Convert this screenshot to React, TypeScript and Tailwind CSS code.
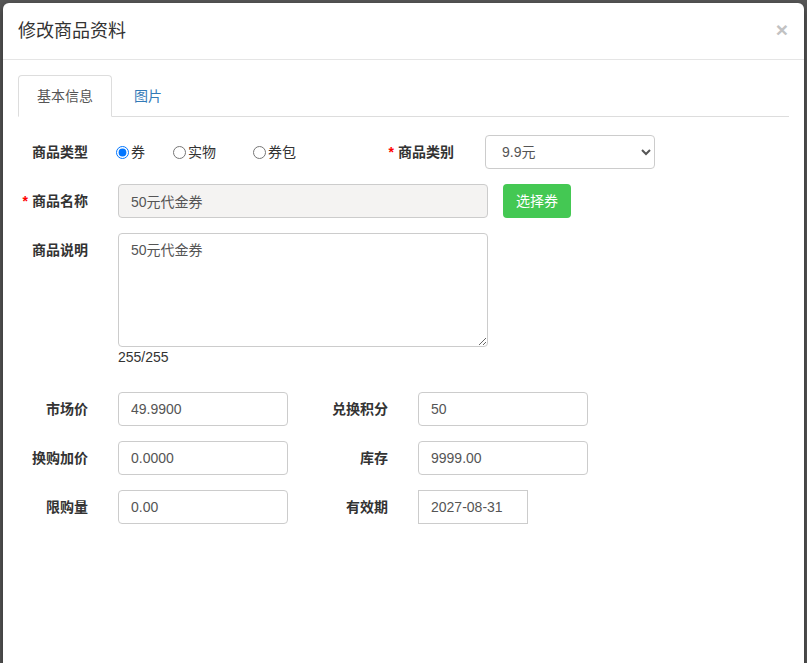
import { useState } from 'react';

const FONT = "'Liberation Sans', 'Noto Sans CJK SC', sans-serif";

const inputCls =
    'h-[34px] border border-[#ccc] rounded-[4px] px-[12px] text-[14px] text-[#555] outline-none';

function Label({ text, required, width }: { text: string; required?: boolean; width: string }) {
    return (
        <label className={`${width} text-right text-[14px] font-bold text-[#333] leading-[20px] shrink-0`}>
            {required && <span className="text-[#f00] mr-[4px]">*</span>}
            {text}
        </label>
    );
}

export default function App() {
    const [kind, setKind] = useState('券');
    const [tab, setTab] = useState('basic');

    return (
        <div
            className="w-[807px] h-[663px] bg-[#585858] overflow-hidden pt-[3px] px-[3px]"
            style={{ fontFamily: FONT }}
        >
            <div className="bg-white rounded-[6px] h-[720px] shadow-[0_3px_9px_rgba(0,0,0,0.5)]">
                {/* Header */}
                <div className="flex items-center justify-between px-[15px] h-[57px] border-b border-[#e5e5e5]">
                    <h4 className="text-[18px] text-[#333] leading-[26px]">修改商品资料</h4>
                    <button type="button" className="text-[21px] font-bold leading-none text-[#c2c2c2] mr-[1px] -mt-[4px]">
                        ×
                    </button>
                </div>

                <div className="px-[15px] pt-[15px]">
                    {/* Tabs */}
                    <ul className="flex border-b border-[#ddd] h-[42px]">
                        <li className="-mb-px mr-[2px]">
                            <button
                                type="button"
                                onClick={() => setTab('basic')}
                                className={
                                    tab === 'basic'
                                        ? 'h-[42px] px-[18px] text-[14px] leading-[20px] text-[#555] bg-white border border-[#ddd] border-b-white rounded-t-[4px]'
                                        : 'h-[42px] px-[18px] text-[14px] leading-[20px] text-[#337ab7] border border-transparent'
                                }
                            >
                                基本信息
                            </button>
                        </li>
                        <li className="-mb-px">
                            <button
                                type="button"
                                onClick={() => setTab('pic')}
                                className={
                                    tab === 'pic'
                                        ? 'h-[42px] px-[19px] text-[14px] leading-[20px] text-[#555] bg-white border border-[#ddd] border-b-white rounded-t-[4px]'
                                        : 'h-[42px] px-[19px] text-[14px] leading-[20px] text-[#337ab7] border border-transparent'
                                }
                            >
                                图片
                            </button>
                        </li>
                    </ul>

                    {/* Row 1: 类型 / 类别 */}
                    <div className="flex items-center mt-[18px]">
                        <Label text="商品类型" width="w-[70px]" />
                        <div className="flex items-center ml-[28px] w-[240px] text-[14px] text-[#333]">
                            {[
                                { v: '券', w: 'w-[57px]' },
                                { v: '实物', w: 'w-[80px]' },
                                { v: '券包', w: 'w-[80px]' },
                            ].map((o) => (
                                <label key={o.v} className={`flex items-center gap-[2px] ${o.w}`}>
                                    <input
                                        type="radio"
                                        name="kind"
                                        checked={kind === o.v}
                                        onChange={() => setKind(o.v)}
                                        className="m-0 w-[13px] h-[13px]"
                                    />
                                    <span>{o.v}</span>
                                </label>
                            ))}
                        </div>
                        <Label text="商品类别" required width="w-[98px]" />
                        <select
                            defaultValue="9.9元"
                            className="ml-[31px] w-[170px] h-[34px] border border-[#ccc] rounded-[4px] pl-[12px] pr-[4px] text-[14px] text-[#555] bg-white"
                        >
                            <option>9.9元</option>
                            <option>19.9元</option>
                        </select>
                    </div>

                    {/* Row 2: 名称 */}
                    <div className="flex items-center mt-[15px]">
                        <Label text="商品名称" required width="w-[70px]" />
                        <input
                            value="50元代金券"
                            disabled
                            readOnly
                            className={`${inputCls} ml-[30px] w-[370px] bg-[#f4f3f2]`}
                        />
                        <button
                            type="button"
                            className="ml-[15px] w-[68px] h-[34px] rounded-[4px] bg-[#44c853] text-white text-[14px]"
                        >
                            选择券
                        </button>
                    </div>

                    {/* Row 3: 说明 */}
                    <div className="flex items-start mt-[15px]">
                        <div className="pt-[7px]">
                            <Label text="商品说明" width="w-[70px] block" />
                        </div>
                        <div className="ml-[30px]">
                            <textarea
                                defaultValue="50元代金券"
                                className="block w-[370px] h-[114px] border border-[#ccc] rounded-[4px] px-[12px] py-[6px] text-[14px] leading-[20px] text-[#555] outline-none"
                            />
                            <div className="text-[14px] leading-[20px] text-[#333]">255/255</div>
                        </div>
                    </div>

                    {/* Row 4-6 */}
                    <div className="flex flex-col gap-[15px] mt-[25px]">
                        <div className="flex items-center">
                            <Label text="市场价" width="w-[70px]" />
                            <input defaultValue="49.9900" className={`${inputCls} ml-[30px] w-[170px]`} />
                            <Label text="兑换积分" width="w-[100px]" />
                            <input defaultValue="50" className={`${inputCls} ml-[30px] w-[170px]`} />
                        </div>
                        <div className="flex items-center">
                            <Label text="换购加价" width="w-[70px]" />
                            <input defaultValue="0.0000" className={`${inputCls} ml-[30px] w-[170px]`} />
                            <Label text="库存" width="w-[100px]" />
                            <input defaultValue="9999.00" className={`${inputCls} ml-[30px] w-[170px]`} />
                        </div>
                        <div className="flex items-center">
                            <Label text="限购量" width="w-[70px]" />
                            <input defaultValue="0.00" className={`${inputCls} ml-[30px] w-[170px]`} />
                            <Label text="有效期" width="w-[100px]" />
                            <input
                                defaultValue="2027-08-31"
                                className="ml-[30px] w-[110px] h-[34px] border border-[#ccc] px-[12px] text-[14px] text-[#555] outline-none"
                            />
                        </div>
                    </div>
                </div>
            </div>
        </div>
    );
}
